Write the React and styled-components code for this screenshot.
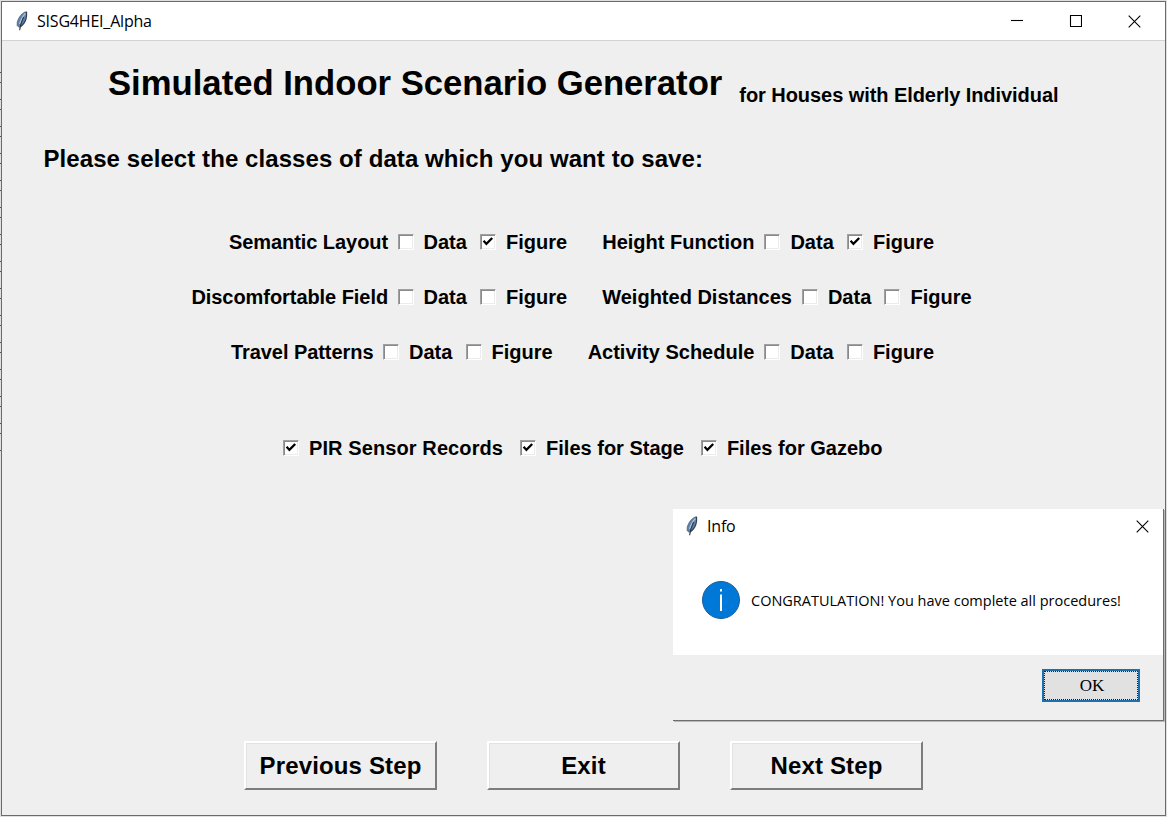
import React from 'react';
import styled, { createGlobalStyle } from 'styled-components';

const Global = createGlobalStyle`
  * { box-sizing: border-box; }
  html, body { margin: 0; padding: 0; }
  body { width: 1167px; height: 817px; overflow: hidden; background: #e2e2e2; }
`;

const Desktop = styled.div`
  position: relative;
  width: 1167px;
  height: 817px;
  padding: 1px;
  background:
    repeating-linear-gradient(180deg, #55555c 0 1px, transparent 1px 10px, #55555c 10px 11px, transparent 11px 27px) 0 72px / 1px 380px no-repeat,
    #dfdfe1;
  font-family: "Liberation Sans", Arial, sans-serif;
  color: #000;
`;

const Window = styled.div`
  display: flex;
  flex-direction: column;
  width: 1165px;
  height: 815px;
  border: 1px solid #6b6b6b;
  background: #efefef;
`;

const TitleBar = styled.header`
  display: flex;
  align-items: center;
  height: ${p => p.$height}px;
  padding-left: ${p => p.$inset}px;
  padding-bottom: 1px;
  background: #fff;
  border-bottom: ${p => (p.$line ? '1px solid #d2d2d2' : '0')};
`;

const Caption = styled.span`
  flex: 1;
  margin-left: 9px;
  font: 16px/20px "Open Sans", "Noto Sans", sans-serif;
  letter-spacing: -0.2px;
  white-space: nowrap;
`;

const Controls = styled.div`
  display: flex;
  gap: 46px;
  margin: 2px ${p => p.$right}px 0 0;
`;

const Glyph = styled.svg`
  display: block;
  width: 13px;
  height: 13px;
  fill: none;
  stroke: #000;
  stroke-width: 1.1;
`;

const Content = styled.main`
  display: flex;
  flex-direction: column;
  flex: 1;
`;

const Text = styled.span`
  font-weight: 700;
  font-size: ${p => p.$size}px;
  line-height: ${p => p.$line || 24}px;
  letter-spacing: ${p => p.$spacing || 0}px;
  white-space: nowrap;
`;

const Heading = styled.div`
  display: flex;
  align-items: baseline;
  gap: 17px;
  height: 60px;
  padding: 22px 0 0 106px;
`;

const Title = styled(Text).attrs({ as: 'h1' })`
  margin: 0;
`;

const Subtitle = styled(Text)`
  position: relative;
  top: 7px;
`;

const Prompt = styled.div`
  padding: 44px 0 0 41.5px;
  height: 72px;
`;

const Options = styled.div`
  display: flex;
  flex-direction: column;
  gap: 31px;
  padding: 57px 4px 0 0;
`;

const OptionRow = styled.div`
  display: flex;
  justify-content: center;
  align-items: center;
  gap: 35px;
  height: 24px;

  &:last-child {
    padding-left: 2px;
  }
`;

const OptionGroup = styled.div`
  display: flex;
  align-items: center;
`;

const RecordRow = styled.div`
  display: flex;
  align-items: center;
  gap: 17px;
  height: 24px;
  margin-top: 72px;
  padding-left: 281px;
`;

const Choice = styled.label`
  display: flex;
  align-items: center;
  gap: 10px;
  margin-left: ${p => p.$gap || 0}px;
`;

const Box = styled.span`
  display: block;
  width: 16px;
  height: 16px;
  border: 1px solid;
  border-color: #a0a0a0 #fff #fff #a0a0a0;
  background: #fff;
  box-shadow: inset 1px 1px 0 #8a8a8a, inset -1px -1px 0 #ececec;
`;

const Mark = styled.svg`
  display: block;
  width: 14px;
  height: 14px;
  fill: none;
  stroke: #000;
  stroke-width: 2.3;
`;

const ButtonRow = styled.div`
  display: flex;
  gap: 50px;
  margin: auto 0 25px 242px;
`;

const StepButton = styled.button`
  width: 193px;
  height: 49px;
  padding: 0;
  border: 2px solid;
  border-color: #fff #7d7d7d #7d7d7d #fff;
  background: #efefef;
  box-shadow: inset 1px 1px 0 #e2e2e2;
  font: 700 24px/44px "Liberation Sans", Arial, sans-serif;
  letter-spacing: 0.15px;
  color: #000;
`;

const Dialog = styled.section`
  position: absolute;
  left: 673px;
  top: 509px;
  width: 491px;
  height: 212px;
  border: solid #6e6e6e;
  border-width: 0 1px 1px 0;
  box-shadow: 1px 1px 0 #b9b9b9;
  background: #fff;
`;

const Message = styled.div`
  display: flex;
  align-items: center;
  gap: 11px;
  height: 112px;
  padding: 2px 0 0 29px;
  font: 14.5px/20px "Open Sans", "Noto Sans", sans-serif;
  white-space: nowrap;
`;

const MessageText = styled.span`
  padding-top: 1px;
`;

const DialogFooter = styled.footer`
  display: flex;
  justify-content: flex-end;
  height: 65px;
  padding: 14px 23px 0 0;
  background: #efefef;
`;

const OkButton = styled.button`
  width: 98px;
  height: 33px;
  padding: 0 0 0 2px;
  border: 2px solid #1d70ad;
  outline: 1px dotted #123;
  outline-offset: -3px;
  background: #e1e1e1;
  font: 17px/28px "Liberation Serif", "Times New Roman", serif;
  color: #000;
`;

function Feather() {
  return (
    <svg width="12" height="20" viewBox="0 0 12 20">
      <path d="M10.6 0.6C6.5 1.5 2.5 6 1.2 11.5L1.2 14.5L3.2 16.6L6.5 14C9.5 11 11.4 5.5 10.6 .6Z" fill="#5b82ad" />
      <path d="M10.6 .6C6.5 1.5 2.5 6 1.2 11.5V14.5L3.2 16.6" fill="none" stroke="#565e6b" strokeWidth=".8" />
      <path d="M9.4 2.5C6.5 5 5 9 3.6 13" fill="none" stroke="#a9c3dc" strokeWidth="1.5" />
      <path d="M10.6 1C11.1 7 9 11.5 6.5 14L4 16" fill="none" stroke="#2c3a4f" strokeWidth="1.1" />
      <path d="M7.6 6C6 9.5 4.2 14 3.6 19.3" fill="none" stroke="#30343c" strokeWidth="1.1" />
    </svg>
  );
}

const Close = () => <Glyph viewBox="0 0 13 13"><path d="M.7.7 12.3 12.3M12.3.7.7 12.3" /></Glyph>;

function Check({ label, checked, gap, spacing }) {
  return (
    <Choice $gap={gap}>
      <Box>{checked && <Mark viewBox="0 0 14 14"><path d="M2.6 5.8 5.4 8.9 11.2 3" /></Mark>}</Box>
      <Text $size={20} $spacing={spacing}>{label}</Text>
    </Choice>
  );
}

function Group({ name, figure, spacing = 0, gap = 10 }) {
  return (
    <OptionGroup>
      <Text $size={20} $spacing={spacing}>{name}</Text>
      <Check label="Data" gap={gap} />
      <Check label="Figure" gap={13.2} checked={figure} />
    </OptionGroup>
  );
}

export default function App() {
  return (
    <Desktop>
      <Global />
      <Window>
        <TitleBar $height={39} $inset={14} $line>
          <Feather />
          <Caption>SISG4HEI_Alpha</Caption>
          <Controls $right={24}>
            <Glyph viewBox="0 0 13 13"><path d="M1 5.5H13" /></Glyph>
            <Glyph viewBox="0 0 13 13"><path d="M1.5.5H12.5V11.5H1.5Z" /></Glyph>
            <Close />
          </Controls>
        </TitleBar>
        <Content>
          <Heading>
            <Title $size={34.67} $line={40}>Simulated Indoor Scenario Generator</Title>
            <Subtitle $size={20} $spacing={-0.06}>for Houses with Elderly Individual</Subtitle>
          </Heading>
          <Prompt><Text $size={24} $line={28} $spacing={0.08}>Please select the classes of data which you want to save:</Text></Prompt>
          <Options>
            <OptionRow>
              <Group name="Semantic Layout" spacing={-0.06} gap={9.5} figure />
              <Group name="Height Function" figure />
            </OptionRow>
            <OptionRow>
              <Group name="Discomfortable Field" spacing={-0.06} gap={9.5} />
              <Group name="Weighted Distances" />
            </OptionRow>
            <OptionRow>
              <Group name="Travel Patterns" spacing={-0.06} gap={9.5} />
              <Group name="Activity Schedule" />
            </OptionRow>
          </Options>
          <RecordRow>
            <Check label="PIR Sensor Records" checked spacing={0.1} />
            <Check label="Files for Stage" checked />
            <Check label="Files for Gazebo" checked />
          </RecordRow>
          <ButtonRow>
            <StepButton>Previous Step</StepButton>
            <StepButton>Exit</StepButton>
            <StepButton>Next Step</StepButton>
          </ButtonRow>
        </Content>
      </Window>
      <Dialog>
        <TitleBar $height={34} $inset={13}>
          <Feather />
          <Caption>Info</Caption>
          <Controls $right={14}><Close /></Controls>
        </TitleBar>
        <Message>
          <svg width="38" height="38" viewBox="0 0 38 38">
            <circle cx="19" cy="19" r="18.5" fill="#0078d7" stroke="#1a5d9a" />
            <path d="M19 13.5V30M19 8V10.5" stroke="#fff" strokeWidth="2" />
          </svg>
          <MessageText>CONGRATULATION! You have complete all procedures!</MessageText>
        </Message>
        <DialogFooter><OkButton>OK</OkButton></DialogFooter>
      </Dialog>
    </Desktop>
  );
}
